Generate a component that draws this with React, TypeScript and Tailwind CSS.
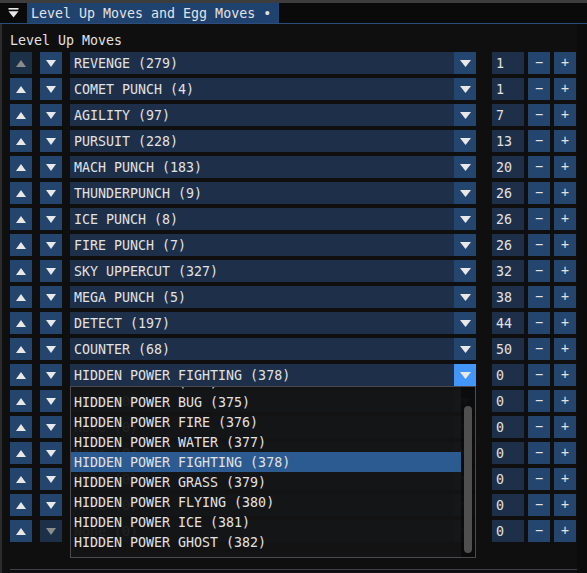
import React from "react";

const moves: [string, string][] = [
  ["REVENGE (279)", "1"],
  ["COMET PUNCH (4)", "1"],
  ["AGILITY (97)", "7"],
  ["PURSUIT (228)", "13"],
  ["MACH PUNCH (183)", "20"],
  ["THUNDERPUNCH (9)", "26"],
  ["ICE PUNCH (8)", "26"],
  ["FIRE PUNCH (7)", "26"],
  ["SKY UPPERCUT (327)", "32"],
  ["MEGA PUNCH (5)", "38"],
  ["DETECT (197)", "44"],
  ["COUNTER (68)", "50"],
  ["HIDDEN POWER FIGHTING (378)", "0"],
  ["None (0)", "0"],
  ["None (0)", "0"],
  ["None (0)", "0"],
  ["None (0)", "0"],
  ["None (0)", "0"],
  ["None (0)", "0"],
];

const popupItems = [
  "HIDDEN POWER (374)",
  "HIDDEN POWER BUG (375)",
  "HIDDEN POWER FIRE (376)",
  "HIDDEN POWER WATER (377)",
  "HIDDEN POWER FIGHTING (378)",
  "HIDDEN POWER GRASS (379)",
  "HIDDEN POWER FLYING (380)",
  "HIDDEN POWER ICE (381)",
  "HIDDEN POWER GHOST (382)",
];

function Tri({ dir, color, w = 10, h = 7 }: { dir: "up" | "down"; color: string; w?: number; h?: number }) {
  const pts = dir === "up" ? `0,${h} ${w},${h} ${w / 2},0` : `0,0 ${w},0 ${w / 2},${h}`;
  return (
    <svg width={w} height={h} viewBox={`0 0 ${w} ${h}`}>
      <polygon points={pts} fill={color} />
    </svg>
  );
}

function ArrowBtn({ dir, disabled }: { dir: "up" | "down"; disabled?: boolean }) {
  return (
    <div
      className={
        "w-[22px] h-[22px] flex items-center justify-center " +
        (disabled ? "bg-[#1c3048]" : "bg-[#24466e]")
      }
    >
      <Tri dir={dir} color={disabled ? "#8c8c8c" : "#e8e8e8"} />
    </div>
  );
}

export default function App() {
  const font = { fontFamily: '"DejaVu Sans Mono", "Liberation Mono", monospace' };
  return (
    <div
      className="w-[587px] h-[573px] bg-[#0f0f0f] overflow-hidden relative text-[13.3px] text-[#e2e2e2]"
      style={font}
    >
      <div className="h-[3px] bg-[#3d3d3d]" />
      <div className="flex h-[20px] bg-[#0a0a0a]">
        <div className="w-[27px] flex items-center justify-center">
          <svg width="11" height="11" viewBox="0 0 11 11">
            <rect x="0.5" y="0" width="10" height="1.6" fill="#e8e8e8" />
            <polygon points="0.5,3.2 10.5,3.2 5.5,9.4" fill="#e8e8e8" />
          </svg>
        </div>
        <div className="w-[252px] bg-[#1f426f] flex items-center pl-[4px] pt-[1px] leading-[20px] whitespace-pre">
          Level Up Moves and Egg Moves •
        </div>
      </div>
      <div className="h-[1px] bg-[#2a4d7d]" />
      <div className="flex h-[549px]">
        <div className="flex-1 border-l-2 border-[#2c2c30] pl-[8px] pt-[8px]">
          <div className="h-[16px] leading-[16px] pt-[1px]">Level Up Moves</div>
          <div className="mt-[4px] flex flex-col gap-[4px]">
            {moves.map(([name, lvl], i) => (
              <div key={i} className="flex items-center h-[22px]">
                <ArrowBtn dir="up" disabled={i === 0} />
                <div className="ml-[8px]">
                  <ArrowBtn dir="down" disabled={i === moves.length - 1} />
                </div>
                <div className="ml-[8px] flex h-[22px]">
                  <div className="w-[384px] bg-[#1d2f49] pl-[4px] pt-[1px] leading-[22px] whitespace-pre">{name}</div>
                  <div
                    className={
                      "w-[22px] h-[22px] flex items-center justify-center " +
                      (i === 12 ? "bg-[#4296fa]" : "bg-[#24466e]")
                    }
                  >
                    <Tri dir="down" color="#e8e8e8" w={11} h={7} />
                  </div>
                </div>
                <div className="ml-[16px] w-[32px] h-[22px] bg-[#1d2f49] pl-[4px] pt-[1px] leading-[22px]">{lvl}</div>
                <div className="ml-[4px] w-[22px] h-[22px] bg-[#24466e] flex items-center justify-center leading-none">
                  −
                </div>
                <div className="ml-[4px] w-[22px] h-[22px] bg-[#24466e] flex items-center justify-center leading-none">
                  +
                </div>
              </div>
            ))}
          </div>
          <div className="mt-[27px] h-[1px] bg-[#3f3f46]" />
        </div>
        <div className="w-[10px] bg-[#0b0b0b]" />
      </div>

      {/* Combo popup */}
      <div className="absolute left-[70px] top-[386px] w-[406px] h-[172px] border border-[#4a4a50] bg-[rgba(20,20,20,0.94)] flex overflow-hidden">
        <div className="flex-1 overflow-hidden">
          <div className="mt-[-15px]">
            {popupItems.map((it, i) => (
              <div
                key={i}
                className={
                  "h-[20px] leading-[20px] pl-[3px] pt-[1px] whitespace-pre " + (i === 4 ? "bg-[#2c5b92]" : "")
                }
              >
                {it}
              </div>
            ))}
          </div>
        </div>
        <div className="w-[14px] bg-[rgba(5,5,5,0.6)] flex justify-center pt-[19px] pb-[4px]">
          <div className="w-[8px] h-full rounded-full bg-[#4f4f4f]" />
        </div>
      </div>
    </div>
  );
}
